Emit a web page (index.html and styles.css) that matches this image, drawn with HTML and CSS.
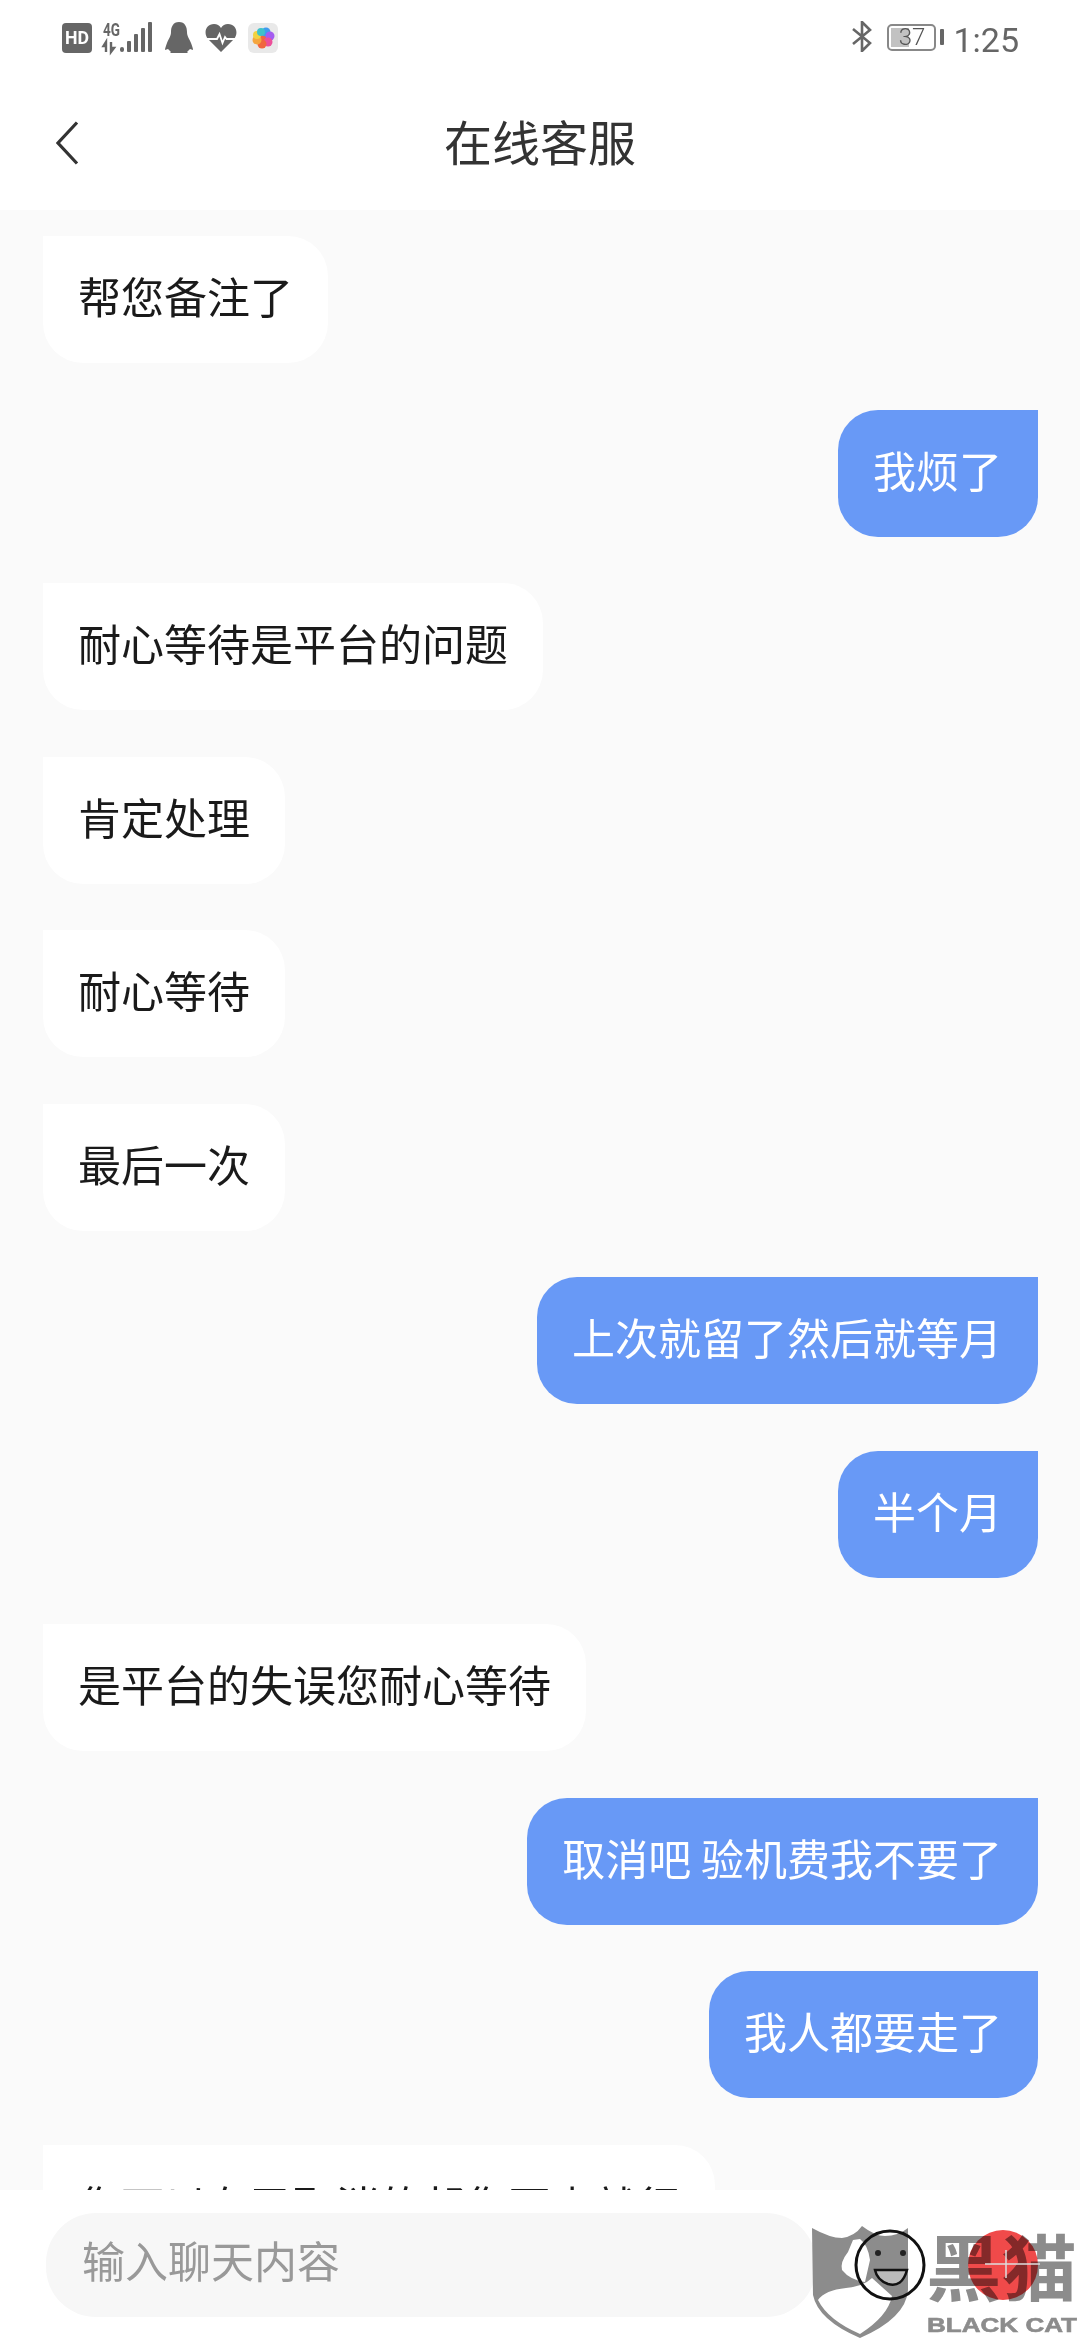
FILE: index.html
```html
<!DOCTYPE html>
<html>
    <head>
        <title>在线客服</title>
        <meta charset="UTF-8">
        <meta name="viewport" content="width=device-width, initial-scale=1.0">
        <link rel="stylesheet" href="styles.css">
    </head>
    <body>
        <div class="statusBar">
            <div class="statusLeft">
                <svg class="iconHd" width="30" height="30" viewBox="0 0 30 30">
                    <rect width="30" height="30" rx="4" fill="#666"/>
                    <text x="15" y="21" text-anchor="middle" textLength="24" lengthAdjust="spacingAndGlyphs" class="hdText">HD</text>
                </svg>
                <svg class="iconSignal" width="51" height="32" viewBox="0 0 51 32">
                    <text x="1" y="15" textLength="17" lengthAdjust="spacingAndGlyphs" class="netText">4G</text>
                    <path d="M4 31V21L1.500 25H4M9 21V31L12 27H9" fill="none" stroke="#666" stroke-width="2.400"/>
                    <rect x="18" y="26" width="4" height="5" rx="2" fill="#666"/>
                    <rect x="25" y="20" width="4" height="11" rx="1" fill="#666"/>
                    <rect x="32" y="13" width="4" height="18" rx="1" fill="#666"/>
                    <rect x="39" y="7" width="4" height="24" rx="1" fill="#666"/>
                    <rect x="46" y="1" width="4" height="30" rx="1" fill="#666"/>
                </svg>
                <svg class="iconPenguin" width="28" height="31" viewBox="0 0 28 31">
                    <path d="M14 0C8 0 6 5 6 10C6 14 4 16 2 21C1 24 0 26 0 28L3 27C4 28 5 29 6 30L5 31H23L22 30C23 29 24 28 25 27L28 28C28 26 27 24 26 21C24 16 22 14 22 10C22 5 20 0 14 0Z" fill="#666"/>
                </svg>
                <svg class="iconHeart" width="32" height="30" viewBox="0 0 32 30">
                    <path d="M16 29L3 16C-2 10 1 1 9 1C12 1 14.500 2.500 16 5C17.500 2.500 20 1 23 1C31 1 34 10 29 16Z" fill="#666"/>
                    <path d="M1 16H12L14.500 11L17.500 20L20 14L21.500 16H31" fill="none" stroke="#fff" stroke-width="1.800"/>
                </svg>
                <svg class="iconApp" width="30" height="30" viewBox="0 0 30 30">
                    <rect width="30" height="30" rx="6" fill="#e9e9e9"/>
                    <circle cx="15" cy="15" r="6" fill="#f0663f"/>
                    <circle cx="18" cy="9" r="4.500" fill="#3f9bf0"/>
                    <circle cx="22" cy="13" r="4.500" fill="#a45cf0"/>
                    <circle cx="20" cy="19" r="4.500" fill="#ec4f9a"/>
                    <circle cx="14" cy="21" r="4.500" fill="#f0663f"/>
                    <circle cx="9" cy="17" r="4.500" fill="#f5a63f"/>
                    <circle cx="9" cy="12" r="4" fill="#f2d23f"/>
                    <circle cx="13" cy="9" r="4" fill="#3fc2c9"/>
                </svg>
            </div>
            <div class="statusRight">
                <svg class="iconBluetooth" width="20" height="31" viewBox="0 0 20 31">
                    <path d="M1 8L18 22L10 30V1L18 9L1 23" fill="none" stroke="#666" stroke-width="2.600"/>
                </svg>
                <div class="battery">
                    <div class="batteryFill"></div>
                    <span class="batteryText">37</span>
                </div>
                <div class="batteryNub"></div>
                <span class="clock">1:25</span>
            </div>
        </div>

        <div class="header">
            <svg class="backIcon" width="23" height="44" viewBox="0 0 23 44">
                <path d="M21 1.500L2 22L21 42.500" fill="none" stroke="#333" stroke-width="3.200"/>
            </svg>
            <div class="title">在线客服</div>
        </div>

        <div class="chat">
            <div class="msg left">帮您备注了</div>
            <div class="msg right">我烦了</div>
            <div class="msg left">耐心等待是平台的问题</div>
            <div class="msg left">肯定处理</div>
            <div class="msg left">耐心等待</div>
            <div class="msg left">最后一次</div>
            <div class="msg right">上次就留了然后就等月</div>
            <div class="msg right">半个月</div>
            <div class="msg left">是平台的失误您耐心等待</div>
            <div class="msg right">取消吧 验机费我不要了</div>
            <div class="msg right">我人都要走了</div>
            <div class="msg left">您可以在已取消的帮您再点就行</div>
        </div>

        <div class="inputBar">
            <div class="inputBox">输入聊天内容</div>
        </div>

        <svg class="watermark" width="300" height="140" viewBox="0 0 300 140">
            <path d="M32 28Q50 38 62 38Q75 36 82 26Q95 36 105 36Q118 36 128 28V90Q126 118 80 138Q38 120 33 95Z" fill="#8c8c8c"/>
            <path d="M38 100Q45 90 66 88Q84 86 92 78L112 96Q108 116 80 134Q48 120 38 100Z" fill="#fff"/>
            <path d="M73 40L80 39Q88 45 90 60L85 82Q70 80 62 70Q60 62 68 52Z" fill="#fff"/>
            <circle cx="110" cy="65" r="34" fill="none" stroke="#111" stroke-width="3"/>
            <circle cx="98" cy="53" r="3" fill="#222"/>
            <circle cx="123" cy="53" r="3" fill="#222"/>
            <path d="M95 70H127Q122 88 108 84Q97 80 95 70Z" fill="#bbb" stroke="#111" stroke-width="2.500"/>
            <circle cx="223" cy="65" r="35" fill="#f04a4a"/>
            <text x="146" y="95" textLength="151" lengthAdjust="spacingAndGlyphs" class="markLogo">黑猫</text>
            <path d="M205 64H260M226 50V78" stroke="#ddd" stroke-width="1.500"/>
            <text x="147" y="132" textLength="150" lengthAdjust="spacingAndGlyphs" class="markName">BLACK CAT</text>
        </svg>
    </body>
</html>
```

FILE: styles.css
```css
body{
    margin: 0;
    width: 1080px;
    height: 2340px;
    overflow: hidden;
    position: relative;
    display: flex;
    flex-direction: column;
    background-color: #fff;
    font-family: "Noto Sans CJK SC", "Noto Sans", sans-serif;
}

.statusBar{
    height: 76px;
    flex-shrink: 0;
    display: flex;
    justify-content: space-between;
    padding: 21px 61px 0 62px;
    box-sizing: border-box;
}
.statusLeft{
    display: flex;
    align-items: flex-start;
}
.statusRight{
    display: flex;
    align-items: flex-start;
}
.iconHd{
    margin-top: 2px;
}
.iconSignal{
    margin-left: 10px;
    overflow: visible;
}
.iconPenguin{
    margin-left: 12px;
    margin-top: 1px;
}
.iconHeart{
    margin-left: 12px;
    margin-top: 2px;
}
.iconApp{
    margin-left: 11px;
    margin-top: 2px;
}
.hdText{
    font-family: "Roboto", sans-serif;
    font-weight: 700;
    font-size: 19px;
    fill: #fff;
}
.netText{
    font-family: "Roboto", sans-serif;
    font-weight: 700;
    font-size: 18px;
    fill: #666;
}
.battery{
    position: relative;
    width: 49px;
    height: 27px;
    margin-left: 15px;
    margin-top: 3px;
    border: 2px solid #888;
    border-radius: 5px;
    box-sizing: border-box;
    text-align: center;
}
.batteryFill{
    position: absolute;
    left: 2px;
    top: 2px;
    bottom: 2px;
    width: 18px;
    background-color: #c2c2c2;
}
.batteryText{
    position: relative;
    display: block;
    font-family: "Roboto", sans-serif;
    font-size: 24px;
    font-weight: 300;
    line-height: 23px;
    color: #555;
}
.batteryNub{
    width: 4px;
    height: 16px;
    margin-left: 4px;
    margin-top: 8px;
    border-radius: 1px;
    background-color: #666;
}
.clock{
    margin-left: 9px;
    font-family: "Roboto", sans-serif;
    font-size: 34px;
    line-height: 38px;
    color: #666;
}

.header{
    height: 134px;
    flex-shrink: 0;
    display: grid;
    grid-template-columns: 1fr auto 1fr;
    align-items: center;
    padding-left: 56px;
    padding-right: 56px;
    box-sizing: border-box;
}
.title{
    font-size: 48px;
    line-height: 60px;
    padding-bottom: 6px;
    color: #333;
}

.chat{
    flex: 1;
    min-height: 0;
    overflow: hidden;
    display: flex;
    flex-direction: column;
    gap: 46.5px;
    padding: 26px 42px 0 43px;
    background-color: #fafafa;
}
.msg{
    flex-shrink: 0;
    padding: 30px 36px 39px 36px;
    font-size: 43px;
    line-height: 58px;
    border-radius: 40px;
    white-space: pre;
}
.left{
    align-self: flex-start;
    padding-left: 35px;
    padding-right: 35px;
    background-color: #fff;
    color: #1a1a1a;
    border-top-left-radius: 0;
}
.right{
    align-self: flex-end;
    padding-left: 35px;
    padding-right: 36px;
    background-color: #6899f6;
    color: #fff;
    border-top-right-radius: 0;
}

.inputBar{
    height: 150px;
    flex-shrink: 0;
    padding: 23px 0 0 46px;
    box-sizing: border-box;
    background-color: #fff;
}
.inputBox{
    width: 770px;
    height: 104px;
    padding-left: 36px;
    box-sizing: border-box;
    border-radius: 50px;
    background-color: #f7f7f7;
    font-size: 43px;
    line-height: 93px;
    color: #999;
}

.watermark{
    position: absolute;
    left: 780px;
    top: 2200px;
}
.markLogo{
    font-family: "Noto Sans CJK SC", sans-serif;
    font-weight: 700;
    font-size: 72px;
    fill: #8c8c8c;
    mix-blend-mode: multiply;
}
.markName{
    font-family: "Liberation Sans", sans-serif;
    font-weight: 700;
    font-size: 21px;
    stroke: #8c8c8c;
    stroke-width: 0.6px;
    fill: #8c8c8c;
}
```
